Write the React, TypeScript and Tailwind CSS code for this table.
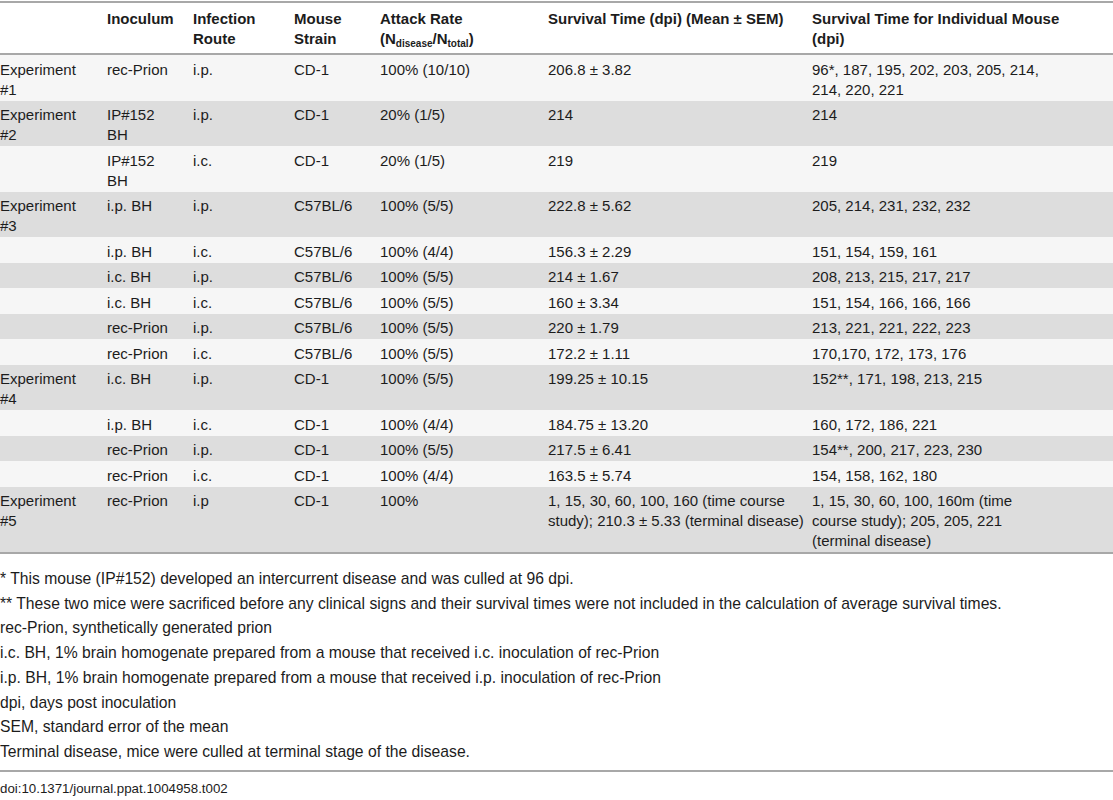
import React from 'react';

type Row = {
  exp?: string;
  inoculum: string;
  route: string;
  strain: string;
  rate: string;
  mean: string;
  individual: string;
};

const rows: Row[] = [
  { exp: 'Experiment #1', inoculum: 'rec-Prion', route: 'i.p.', strain: 'CD-1', rate: '100% (10/10)', mean: '206.8 ± 3.82', individual: '96*, 187, 195, 202, 203, 205, 214, 214, 220, 221' },
  { exp: 'Experiment #2', inoculum: 'IP#152 BH', route: 'i.p.', strain: 'CD-1', rate: '20% (1/5)', mean: '214', individual: '214' },
  { inoculum: 'IP#152 BH', route: 'i.c.', strain: 'CD-1', rate: '20% (1/5)', mean: '219', individual: '219' },
  { exp: 'Experiment #3', inoculum: 'i.p. BH', route: 'i.p.', strain: 'C57BL/6', rate: '100% (5/5)', mean: '222.8 ± 5.62', individual: '205, 214, 231, 232, 232' },
  { inoculum: 'i.p. BH', route: 'i.c.', strain: 'C57BL/6', rate: '100% (4/4)', mean: '156.3 ± 2.29', individual: '151, 154, 159, 161' },
  { inoculum: 'i.c. BH', route: 'i.p.', strain: 'C57BL/6', rate: '100% (5/5)', mean: '214 ± 1.67', individual: '208, 213, 215, 217, 217' },
  { inoculum: 'i.c. BH', route: 'i.c.', strain: 'C57BL/6', rate: '100% (5/5)', mean: '160 ± 3.34', individual: '151, 154, 166, 166, 166' },
  { inoculum: 'rec-Prion', route: 'i.p.', strain: 'C57BL/6', rate: '100% (5/5)', mean: '220 ± 1.79', individual: '213, 221, 221, 222, 223' },
  { inoculum: 'rec-Prion', route: 'i.c.', strain: 'C57BL/6', rate: '100% (5/5)', mean: '172.2 ± 1.11', individual: '170,170, 172, 173, 176' },
  { exp: 'Experiment #4', inoculum: 'i.c. BH', route: 'i.p.', strain: 'CD-1', rate: '100% (5/5)', mean: '199.25 ± 10.15', individual: '152**, 171, 198, 213, 215' },
  { inoculum: 'i.p. BH', route: 'i.c.', strain: 'CD-1', rate: '100% (4/4)', mean: '184.75 ± 13.20', individual: '160, 172, 186, 221' },
  { inoculum: 'rec-Prion', route: 'i.p.', strain: 'CD-1', rate: '100% (5/5)', mean: '217.5 ± 6.41', individual: '154**, 200, 217, 223, 230' },
  { inoculum: 'rec-Prion', route: 'i.c.', strain: 'CD-1', rate: '100% (4/4)', mean: '163.5 ± 5.74', individual: '154, 158, 162, 180' },
  { exp: 'Experiment #5', inoculum: 'rec-Prion', route: 'i.p', strain: 'CD-1', rate: '100%', mean: '1, 15, 30, 60, 100, 160 (time course study); 210.3 ± 5.33 (terminal disease)', individual: '1, 15, 30, 60, 100, 160m (time course study); 205, 205, 221 (terminal disease)' },
];

const notes = [
  '* This mouse (IP#152) developed an intercurrent disease and was culled at 96 dpi.',
  '** These two mice were sacrificed before any clinical signs and their survival times were not included in the calculation of average survival times.',
  'rec-Prion, synthetically generated prion',
  'i.c. BH, 1% brain homogenate prepared from a mouse that received i.c. inoculation of rec-Prion',
  'i.p. BH, 1% brain homogenate prepared from a mouse that received i.p. inoculation of rec-Prion',
  'dpi, days post inoculation',
  'SEM, standard error of the mean',
  'Terminal disease, mice were culled at terminal stage of the disease.',
];

const th = 'text-left align-top font-bold pt-[6px] pb-[4px]';
const td = 'align-top pt-[4.5px] pb-[1px]';

export default function App() {
  return (
    <div className="bg-white text-[#1c1c1c] text-[15px] leading-[20px] pt-[1px]" style={{ fontFamily: '"Liberation Sans", Arial, Helvetica, sans-serif' }}>
      <table className="w-full table-fixed border-collapse">
        <colgroup>
          <col className="w-[107px]" />
          <col className="w-[86px]" />
          <col className="w-[101px]" />
          <col className="w-[86px]" />
          <col className="w-[168px]" />
          <col className="w-[264px]" />
          <col />
        </colgroup>
        <thead>
          <tr className="border-t-2 border-b-2 border-[#a8a8a8]">
            <th className={`${th} pr-4`}></th>
            <th className={`${th} pr-4`}>Inoculum</th>
            <th className={`${th} pr-4`}>Infection Route</th>
            <th className={`${th} pr-4`}>Mouse Strain</th>
            <th className={`${th} pr-4`}>
              Attack Rate (N<sub className="text-[10px] leading-none">disease</sub>/N<sub className="text-[10px] leading-none">total</sub>)
            </th>
            <th className={`${th} pr-1`}>Survival Time (dpi) (Mean ± SEM)</th>
            <th className={`${th} pr-[40px]`}>Survival Time for Individual Mouse (dpi)</th>
          </tr>
        </thead>
        <tbody className="border-b-2 border-[#a8a8a8]">
          {rows.map((r, i) => (
            <tr key={i} className={i % 2 === 0 ? 'bg-[#f6f6f6]' : 'bg-[#dddddd]'}>
              <td className={`${td} pr-4`}>{r.exp}</td>
              <td className={`${td} pr-4`}>{r.inoculum}</td>
              <td className={`${td} pr-4`}>{r.route}</td>
              <td className={`${td} pr-4`}>{r.strain}</td>
              <td className={`${td} pr-4`}>{r.rate}</td>
              <td className={`${td} pr-1`}>{r.mean}</td>
              <td className={`${td} pr-[58px]`}>{r.individual}</td>
            </tr>
          ))}
        </tbody>
      </table>

      <div className="mt-[13px] text-[15.7px] leading-[24.7px]">
        {notes.map((n) => (
          <p key={n}>{n}</p>
        ))}
      </div>

      <div className="mt-[5px] border-t-2 border-[#a8a8a8] pt-[7px] text-[13.3px]">
        doi:10.1371/journal.ppat.1004958.t002
      </div>
    </div>
  );
}
